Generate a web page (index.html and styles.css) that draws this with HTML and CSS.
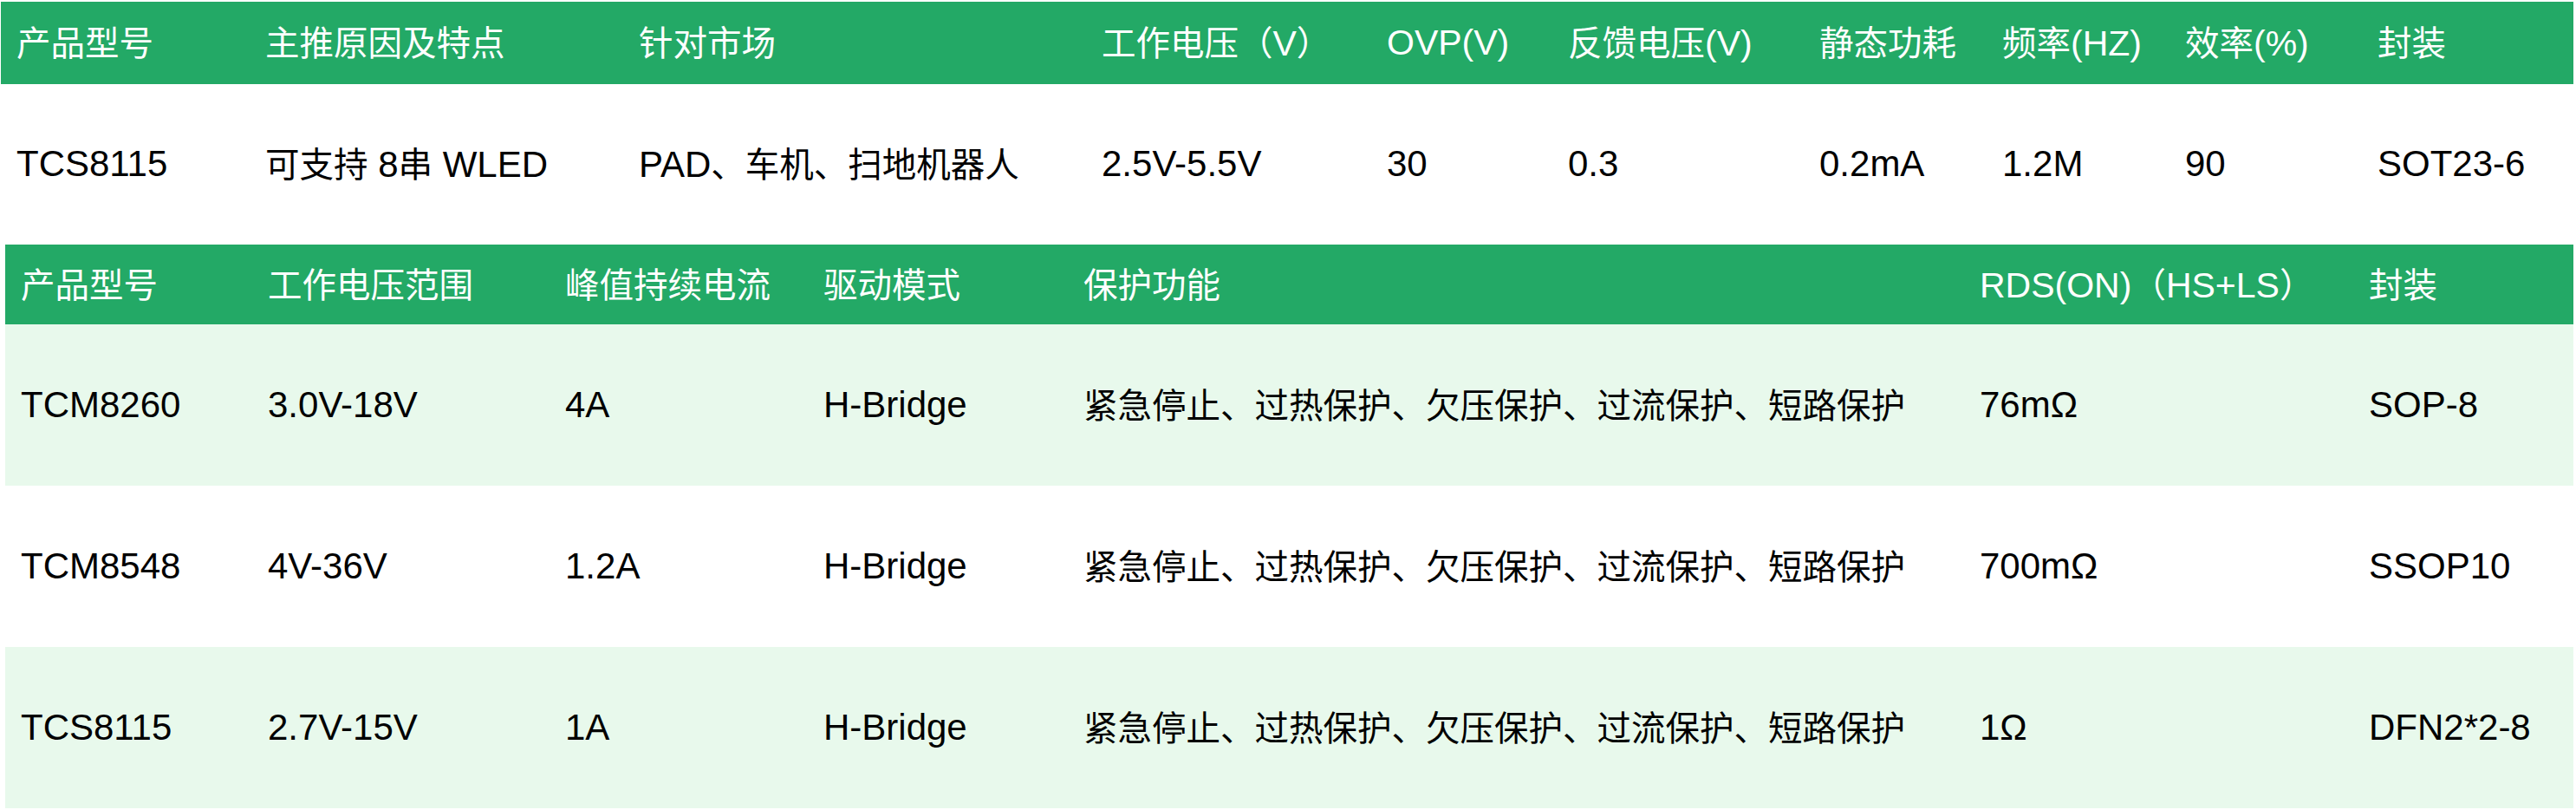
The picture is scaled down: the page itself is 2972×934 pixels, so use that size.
FILE: index.html
```html
<!DOCTYPE html>
<html lang="zh-CN">
<head>
<meta charset="utf-8">
<title>产品参数</title>
<link rel="stylesheet" href="styles.css">
</head>
<body>
<table class="spec spec-led">
  <colgroup>
    <col class="c1-1"><col class="c1-2"><col class="c1-3"><col class="c1-4"><col class="c1-5">
    <col class="c1-6"><col class="c1-7"><col class="c1-8"><col class="c1-9"><col class="c1-10">
  </colgroup>
  <thead>
    <tr class="head">
      <th><span class="zh">产品型号</span></th>
      <th><span class="zh">主推原因及特点</span></th>
      <th><span class="zh">针对市场</span></th>
      <th><span class="zh">工作电压（</span>V<span class="zh">）</span></th>
      <th>OVP(V)</th>
      <th><span class="zh">反馈电压</span>(V)</th>
      <th><span class="zh">静态功耗</span></th>
      <th><span class="zh">频率</span>(HZ)</th>
      <th><span class="zh">效率</span>(%)</th>
      <th><span class="zh">封装</span></th>
    </tr>
  </thead>
  <tbody>
    <tr class="row white">
      <td>TCS8115</td>
      <td><span class="zh">可支持</span> 8<span class="zh">串</span> WLED</td>
      <td>PAD<span class="zh">、车机、扫地机器人</span></td>
      <td>2.5V-5.5V</td>
      <td>30</td>
      <td>0.3</td>
      <td>0.2mA</td>
      <td>1.2M</td>
      <td>90</td>
      <td>SOT23-6</td>
    </tr>
  </tbody>
</table>
<table class="spec spec-motor">
  <colgroup>
    <col class="c2-1"><col class="c2-2"><col class="c2-3"><col class="c2-4"><col class="c2-5"><col class="c2-6"><col class="c2-7">
  </colgroup>
  <thead>
    <tr class="head head2">
      <th><span class="zh">产品型号</span></th>
      <th><span class="zh">工作电压范围</span></th>
      <th><span class="zh">峰值持续电流</span></th>
      <th><span class="zh">驱动模式</span></th>
      <th><span class="zh">保护功能</span></th>
      <th>RDS(ON)<span class="zh">（</span>HS+LS<span class="zh">）</span></th>
      <th><span class="zh">封装</span></th>
    </tr>
  </thead>
  <tbody>
    <tr class="row tint">
      <td>TCM8260</td><td>3.0V-18V</td><td>4A</td><td>H-Bridge</td>
      <td><span class="zh">紧急停止、过热保护、欠压保护、过流保护、短路保护</span></td>
      <td>76mΩ</td><td>SOP-8</td>
    </tr>
    <tr class="row white">
      <td>TCM8548</td><td>4V-36V</td><td>1.2A</td><td>H-Bridge</td>
      <td><span class="zh">紧急停止、过热保护、欠压保护、过流保护、短路保护</span></td>
      <td>700mΩ</td><td>SSOP10</td>
    </tr>
    <tr class="row tint">
      <td>TCS8115</td><td>2.7V-15V</td><td>1A</td><td>H-Bridge</td>
      <td><span class="zh">紧急停止、过热保护、欠压保护、过流保护、短路保护</span></td>
      <td>1Ω</td><td>DFN2*2-8</td>
    </tr>
  </tbody>
</table>
</body>
</html>
```

FILE: styles.css
```css
html, body {
  margin: 0;
  padding: 0;
  background: #ffffff;
}

body {
  padding-top: 2px;
  font-family: "Liberation Sans", "Noto Sans CJK SC", sans-serif;
  font-size: 42px;
  color: #000000;
}

.spec {
  border-collapse: collapse;
  border-spacing: 0;
  table-layout: fixed;
}

.spec-led {
  width: 2968px;
  margin-left: 1px;
}

.spec-motor {
  width: 2963px;
  margin-left: 6px;
}

.spec th,
.spec td {
  padding: 0 18px;
  text-align: left;
  vertical-align: middle;
  white-space: nowrap;
  overflow: hidden;
  font-weight: normal;
  line-height: 1.2;
}

.spec th {
  font-size: 41px;
}

.zh {
  font-family: "Noto Sans CJK SC", sans-serif;
  font-size: 39.5px;
}

.head {
  background: #23a966;
  color: #ffffff;
  height: 95px;
}

.head2 {
  height: 92px;
}

.row {
  height: 186px;
}

.row.white {
  background: #ffffff;
}

.row.tint {
  background: #e8f9ec;
}

.spec-led .row {
  height: 185px;
}

/* table 1 column widths */
.c1-1 { width: 287px; }
.c1-2 { width: 431px; }
.c1-3 { width: 534px; }
.c1-4 { width: 329px; }
.c1-5 { width: 209px; }
.c1-6 { width: 290px; }
.c1-7 { width: 211px; }
.c1-8 { width: 211px; }
.c1-9 { width: 222px; }
.c1-10 { width: 244px; }

/* table 2 column widths */
.c2-1 { width: 285px; }
.c2-2 { width: 343px; }
.c2-3 { width: 298px; }
.c2-4 { width: 300px; }
.c2-5 { width: 1034px; }
.c2-6 { width: 449px; }
.c2-7 { width: 254px; }
```
